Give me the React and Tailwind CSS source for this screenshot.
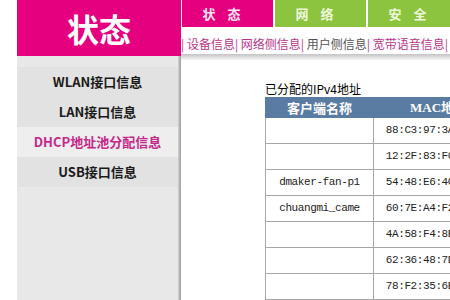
import React from 'react';

const cjk = '"Noto Sans CJK SC", "Liberation Sans", sans-serif';
const mono = '"Liberation Mono", "Noto Sans CJK SC", monospace';

const menu = [
  { label: 'WLAN接口信息' },
  { label: 'LAN接口信息' },
  { label: 'DHCP地址池分配信息', active: true },
  { label: 'USB接口信息' },
];

const tabs = [
  { label: '状态', active: true },
  { label: '网络' },
  { label: '安全' },
];

const rows = [
  { name: '', mac: '88:C3:97:3A:5E:21' },
  { name: '', mac: '12:2F:83:F0:9B:44' },
  { name: 'dmaker-fan-p1', mac: '54:48:E6:4C:12:7D' },
  { name: 'chuangmi_came', mac: '60:7E:A4:F2:88:19' },
  { name: '', mac: '4A:58:F4:8E:03:B6' },
  { name: '', mac: '62:36:48:7D:C1:5A' },
  { name: '', mac: '78:F2:35:6B:90:E2' },
];

const App = () => {
  return (
    <div className="w-[450px] h-[300px] overflow-hidden bg-white flex" style={{ fontFamily: cjk }}>
      <div className="w-[17px] shrink-0" />

      {/* Sidebar */}
      <aside className="w-[164px] shrink-0 flex flex-col">
        <div className="h-[56px] bg-[#e4007e] flex items-center justify-center text-white text-[32px] font-bold leading-none">
          状态
        </div>
        <div className="flex-1 flex bg-[#e8e8e8]">
          <div className="flex-1 pt-[11px]">
            {menu.map(item => (
              <div
                key={item.label}
                className={`h-[30px] flex items-center justify-center text-[13px] font-bold ${
                  item.active ? 'bg-[#eeeeee] text-[#c4288a]' : 'bg-[#e2e2e2] text-[#1a1a1a]'
                }`}
              >
                {item.label}
              </div>
            ))}
          </div>
          <div className="w-[3px] bg-gradient-to-r from-[#d6d6d6] to-[#9a9a9a]" />
        </div>
      </aside>

      {/* Main */}
      <main className="flex-1 flex flex-col min-w-0">
        <div className="h-[29px] flex gap-[2px] pl-[1px]">
          {tabs.map(tab => (
            <div
              key={tab.label}
              className={`w-[91px] shrink-0 flex items-center justify-center text-[13px] font-bold tracking-[12px] ${
                tab.active ? 'bg-[#e4007e] text-[#fbe6f2]' : 'bg-[#8cc43f] text-[#eef7dc]'
              }`}
            >
              {tab.label}
            </div>
          ))}
        </div>
        <div className="h-[28px] pt-[7px] flex items-center whitespace-nowrap text-[12px] text-[#b8358a]">
          <span>|&nbsp;设备信息|&nbsp;网络侧信息|&nbsp;</span>
          <span className="text-[#555555]">用户侧信息</span>
          <span>|&nbsp;宽带语音信息|</span>
        </div>
        <div className="h-[6px] bg-gradient-to-b from-[#c4c4c4] to-[#f6f6f6]" />

        <div className="flex-1 pl-[84px] pt-[21px]">
          <div className="text-[12px] leading-[16px] text-black whitespace-nowrap">已分配的IPv4地址</div>
          <table className="border-collapse w-[238px] table-fixed">
            <thead>
              <tr className="h-[20px] bg-[#5a7ba2] text-white text-[13px] font-bold">
                <th className="w-[108px] border border-[#5a7ba2] font-bold">客户端名称</th>
                <th className="w-[130px] border border-[#5a7ba2] border-l-[#a8b8cc] font-bold" style={{ fontFamily: '"Liberation Serif", "Noto Sans CJK SC", serif' }}>
                  MAC地址
                </th>
              </tr>
            </thead>
            <tbody>
              {rows.map((row, i) => (
                <tr key={i} className="h-[26px] text-[11px] text-[#222222]" style={{ fontFamily: mono }}>
                  <td className="border border-[#a6a6a6] text-center tracking-[-0.4px] whitespace-nowrap">{row.name}</td>
                  <td className="border border-[#a6a6a6] text-center tracking-[-0.4px] whitespace-nowrap overflow-hidden">{row.mac}</td>
                </tr>
              ))}
            </tbody>
          </table>
        </div>
      </main>
    </div>
  );
};

export default App;
